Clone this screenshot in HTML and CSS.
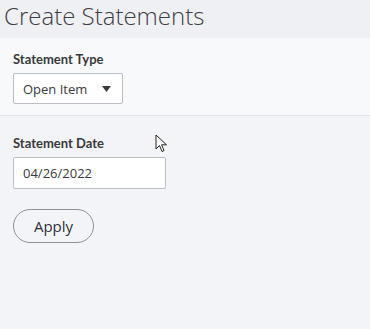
FILE: index.html
```html
<!DOCTYPE html>
<html lang="en">
<head>
    <meta charset="UTF-8">
    <meta name="viewport" content="width=device-width, initial-scale=1.0">
    <title>Create Statements</title>
    <link rel="stylesheet" href="styles.css">
</head>
<body>
    <header>
        <h1>Create Statements</h1>
    </header>

    <div class="panel">
        <label class="label">Statement Type</label>
        <div class="select">
            <span>Open Item</span>
            <svg class="caret" width="9" height="6" viewBox="0 0 9 6">
                <path d="M0 0 H9 L4.5 6 Z" fill="#393a3d"/>
            </svg>
        </div>
    </div>

    <div class="main">
        <label class="label">Statement Date</label>
        <div class="input">04/26/2022</div>
        <button class="apply">Apply</button>

        <svg class="cursor" width="13" height="20" viewBox="0 0 13 20">
            <path d="M1 1 L1 15 L4.5 11.5 L7 17.5 L9 16.6 L6.6 10.8 L11.5 10.8 Z" fill="#fff" stroke="#222" stroke-width="1" stroke-linejoin="round"/>
        </svg>
    </div>
</body>
</html>
```

FILE: styles.css
```css
* {
    padding: 0;
    margin: 0;
    box-sizing: border-box;
}

body {
    background: #f3f4f8;
    color: #393a3d;
    font-family: "Open Sans", sans-serif;
    height: 100vh;
}

header {
    background: #eff0f4;
    height: 38px;
    padding: 0 4px;
}

h1 {
    font-size: 24px;
    font-weight: 300;
    line-height: 31px;
    color: #3d3e45;
}

.panel {
    background: #f8f9fb;
    border-bottom: 1px solid #e3e5ea;
    height: 78px;
    padding: 13px 13px 0;
}

.label {
    display: block;
    font-family: "Lato", sans-serif;
    font-size: 13px;
    font-weight: 700;
    line-height: 16px;
    margin-bottom: 6px;
    color: #393a3d;
}

.select {
    width: 110px;
    height: 31px;
    background: #fff;
    border: 1px solid #babec5;
    border-radius: 2px;
    display: flex;
    align-items: center;
    justify-content: space-between;
    padding: 0 11px 0 9px;
    font-size: 13px;
}

.main {
    position: relative;
    padding: 19px 13px 0;
}

.input {
    width: 153px;
    height: 32px;
    background: #fff;
    border: 1px solid #babec5;
    border-radius: 2px;
    padding: 0 9px;
    display: flex;
    align-items: center;
    font-size: 13px;
}

.apply {
    display: block;
    margin-top: 20px;
    width: 81px;
    height: 34px;
    border: 1px solid #8d9096;
    border-radius: 17px;
    background: transparent;
    color: #2f3035;
    font-family: "Open Sans", sans-serif;
    font-size: 15px;
    font-weight: 400;
}

.cursor {
    position: absolute;
    left: 155px;
    top: 18px;
}
```
